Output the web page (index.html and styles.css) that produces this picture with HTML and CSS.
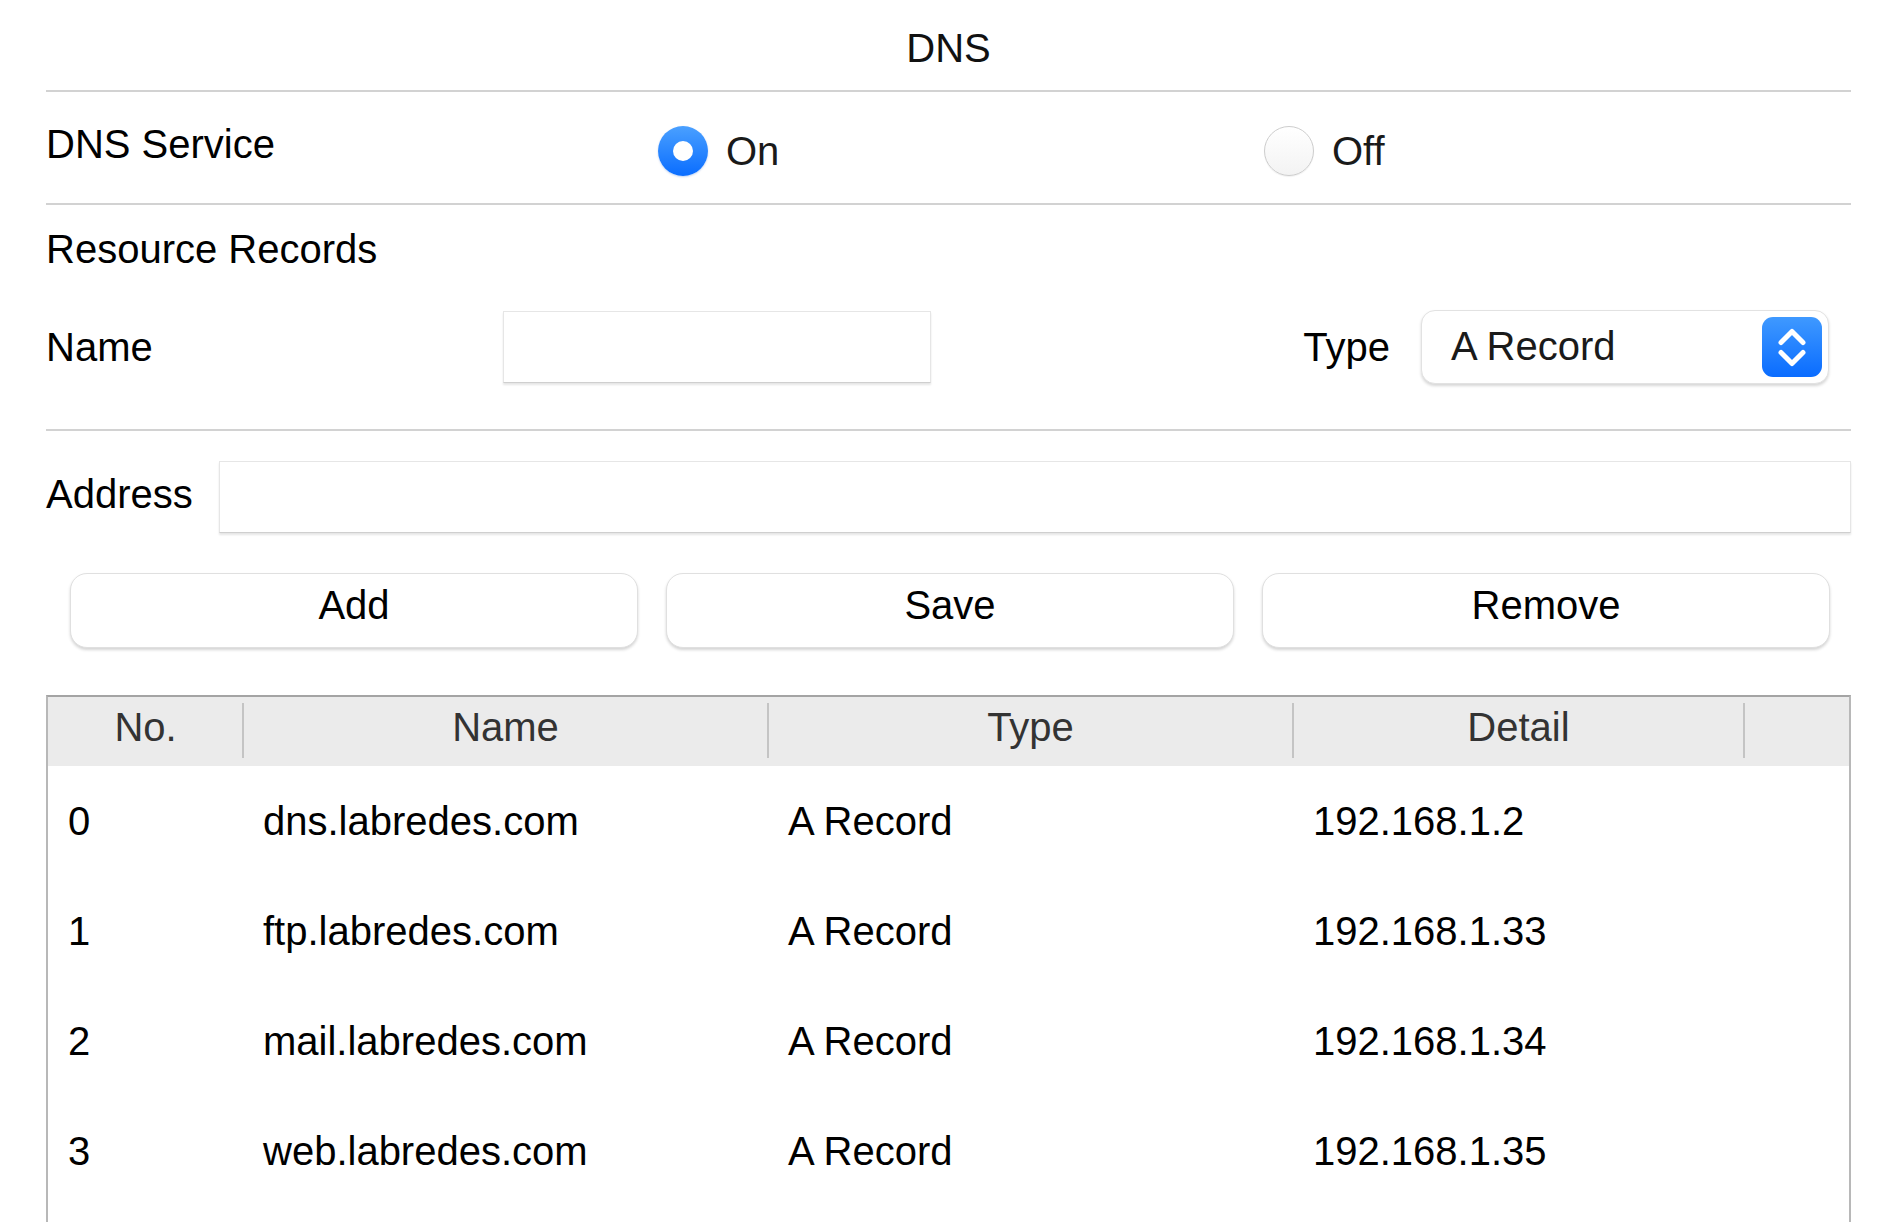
FILE: index.html
```html
<!DOCTYPE html>
<html lang="en">
<head>
<meta charset="utf-8">
<title>DNS</title>
<link rel="stylesheet" href="styles.css">
</head>
<body>
<div class="page">
  <div class="title">DNS</div>
  <div class="rule"></div>

  <div class="service-row">
    <div class="service-label">DNS Service</div>
    <label class="radio-opt">
      <span class="radio radio-on"><span class="radio-dot"></span></span>
      <span>On</span>
    </label>
    <label class="radio-opt">
      <span class="radio radio-off"></span>
      <span>Off</span>
    </label>
  </div>
  <div class="rule"></div>

  <div class="heading">Resource Records</div>

  <div class="name-row">
    <div class="name-label">Name</div>
    <div class="text-input name-input"></div>
    <div class="type-group">
      <div class="type-label">Type</div>
      <div class="select">
        <span class="select-text">A Record</span>
        <span class="select-btn">
          <svg width="60" height="60" viewBox="0 0 60 60">
            <polyline points="19,25.5 30,14.5 41,25.5" fill="none" stroke="#fff" stroke-width="5" stroke-linecap="round" stroke-linejoin="round"/>
            <polyline points="19,35.5 30,46.5 41,35.5" fill="none" stroke="#fff" stroke-width="5" stroke-linecap="round" stroke-linejoin="round"/>
          </svg>
        </span>
      </div>
    </div>
  </div>
  <div class="rule rule-gap"></div>

  <div class="address-row">
    <div class="address-label">Address</div>
    <div class="text-input address-input"></div>
  </div>

  <div class="buttons">
    <div class="btn">Add</div>
    <div class="btn">Save</div>
    <div class="btn">Remove</div>
  </div>

  <div class="table">
    <div class="thead">
      <div class="th sep">No.</div>
      <div class="th sep">Name</div>
      <div class="th sep">Type</div>
      <div class="th sep">Detail</div>
      <div class="th"></div>
    </div>
    <div class="tr">
      <div class="td">0</div><div class="td">dns.labredes.com</div><div class="td">A Record</div><div class="td">192.168.1.2</div><div class="td"></div>
    </div>
    <div class="tr">
      <div class="td">1</div><div class="td">ftp.labredes.com</div><div class="td">A Record</div><div class="td">192.168.1.33</div><div class="td"></div>
    </div>
    <div class="tr">
      <div class="td">2</div><div class="td">mail.labredes.com</div><div class="td">A Record</div><div class="td">192.168.1.34</div><div class="td"></div>
    </div>
    <div class="tr">
      <div class="td">3</div><div class="td">web.labredes.com</div><div class="td">A Record</div><div class="td">192.168.1.35</div><div class="td"></div>
    </div>
    <div class="tr">
      <div class="td"></div><div class="td"></div><div class="td"></div><div class="td"></div><div class="td"></div>
    </div>
  </div>
</div>
</body>
</html>
```

FILE: styles.css
```css
html, body {
  margin: 0;
  padding: 0;
  background: #ffffff;
}

body {
  font-family: "Liberation Sans", Arial, Helvetica, sans-serif;
  font-size: 40px;
  line-height: 46px;
  color: #000000;
  overflow: hidden;
}

.page {
  padding: 0 45px 0 46px;
}

.title {
  height: 84px;
  padding-top: 6px;
  display: flex;
  align-items: center;
  justify-content: center;
  color: #111;
}

.rule {
  height: 2px;
  background: #d2d2d2;
}

.service-row {
  height: 111px;
  display: grid;
  grid-template-columns: 612px 606px auto;
  align-items: center;
}

.service-label {
  margin-bottom: 7px;
}

.radio-opt {
  display: flex;
  align-items: center;
  gap: 18px;
  margin-top: 7px;
  color: #1a1a1a;
}

.radio {
  width: 50px;
  height: 50px;
  border-radius: 50%;
  box-sizing: border-box;
  display: flex;
  align-items: center;
  justify-content: center;
  flex: none;
}

.radio-on {
  background: linear-gradient(#4aa0ff, #0a6dff);
  box-shadow: 0 1px 2px rgba(0, 80, 200, 0.25);
}

.radio-dot {
  width: 20px;
  height: 20px;
  border-radius: 50%;
  background: #ffffff;
}

.radio-off {
  border: 1.5px solid #cdcdcd;
  background: linear-gradient(#ffffff, #f3f3f3);
  box-shadow: 0 1px 1px rgba(0, 0, 0, 0.06);
}

.heading {
  padding-top: 21px;
}

.name-row {
  margin-top: 38px;
  height: 74px;
  display: flex;
  align-items: center;
  padding-right: 22px;
}

.name-label {
  width: 457px;
  flex: none;
}

.text-input {
  box-sizing: border-box;
  height: 72px;
  background: #ffffff;
  border: 1px solid #e6e6e6;
  border-bottom: 1px solid #cfcfcf;
  box-shadow: 0 2px 2px rgba(0, 0, 0, 0.10);
}

.name-input {
  width: 428px;
  flex: none;
}

.type-group {
  margin-left: auto;
  display: flex;
  align-items: center;
  gap: 31px;
}

.select {
  box-sizing: border-box;
  width: 408px;
  height: 74px;
  border-radius: 14px;
  border: 1px solid #e2e2e2;
  box-shadow: 0 2px 3px rgba(0, 0, 0, 0.16);
  background: #ffffff;
  display: flex;
  align-items: center;
  justify-content: space-between;
  padding: 0 6px 0 29px;
}

.select-text {
  color: #1a1a1a;
  margin-bottom: 2px;
}

.select-btn {
  width: 60px;
  height: 60px;
  border-radius: 11px;
  background: linear-gradient(#3f99ff, #0a6cff);
  display: flex;
}

.rule-gap {
  margin-top: 45px;
}

.address-row {
  margin-top: 30px;
  display: flex;
  align-items: center;
  gap: 26px;
}

.address-label {
  flex: none;
  margin-bottom: 6px;
}

.address-input {
  flex: 1;
}

.buttons {
  margin-top: 40px;
  padding: 0 21px 0 24px;
  display: grid;
  grid-template-columns: 1fr 1fr 1fr;
  gap: 28px;
}

.btn {
  box-sizing: border-box;
  height: 75px;
  border-radius: 17px;
  border: 1px solid #e0e0e0;
  box-shadow: 0 2px 3px rgba(0, 0, 0, 0.17);
  background: #ffffff;
  display: flex;
  align-items: center;
  justify-content: center;
  padding-bottom: 12px;
}

.table {
  margin-top: 47px;
  border-top: 2px solid #a4a4a4;
  border-left: 2px solid #b8b8b8;
  border-right: 2px solid #b8b8b8;
}

.thead, .tr {
  display: grid;
  grid-template-columns: 195px 525px 525px 451px 1fr;
}

.thead {
  height: 69px;
  background: #ebebeb;
}

.th {
  position: relative;
  display: flex;
  align-items: center;
  justify-content: center;
  color: #333333;
  padding-bottom: 10px;
}

.th.sep::after {
  content: "";
  position: absolute;
  right: -1px;
  top: 6px;
  bottom: 8px;
  width: 2px;
  background: #c4c4c4;
}

.tr {
  height: 110px;
}

.td {
  display: flex;
  align-items: center;
  padding-left: 20px;
  white-space: nowrap;
}
```
